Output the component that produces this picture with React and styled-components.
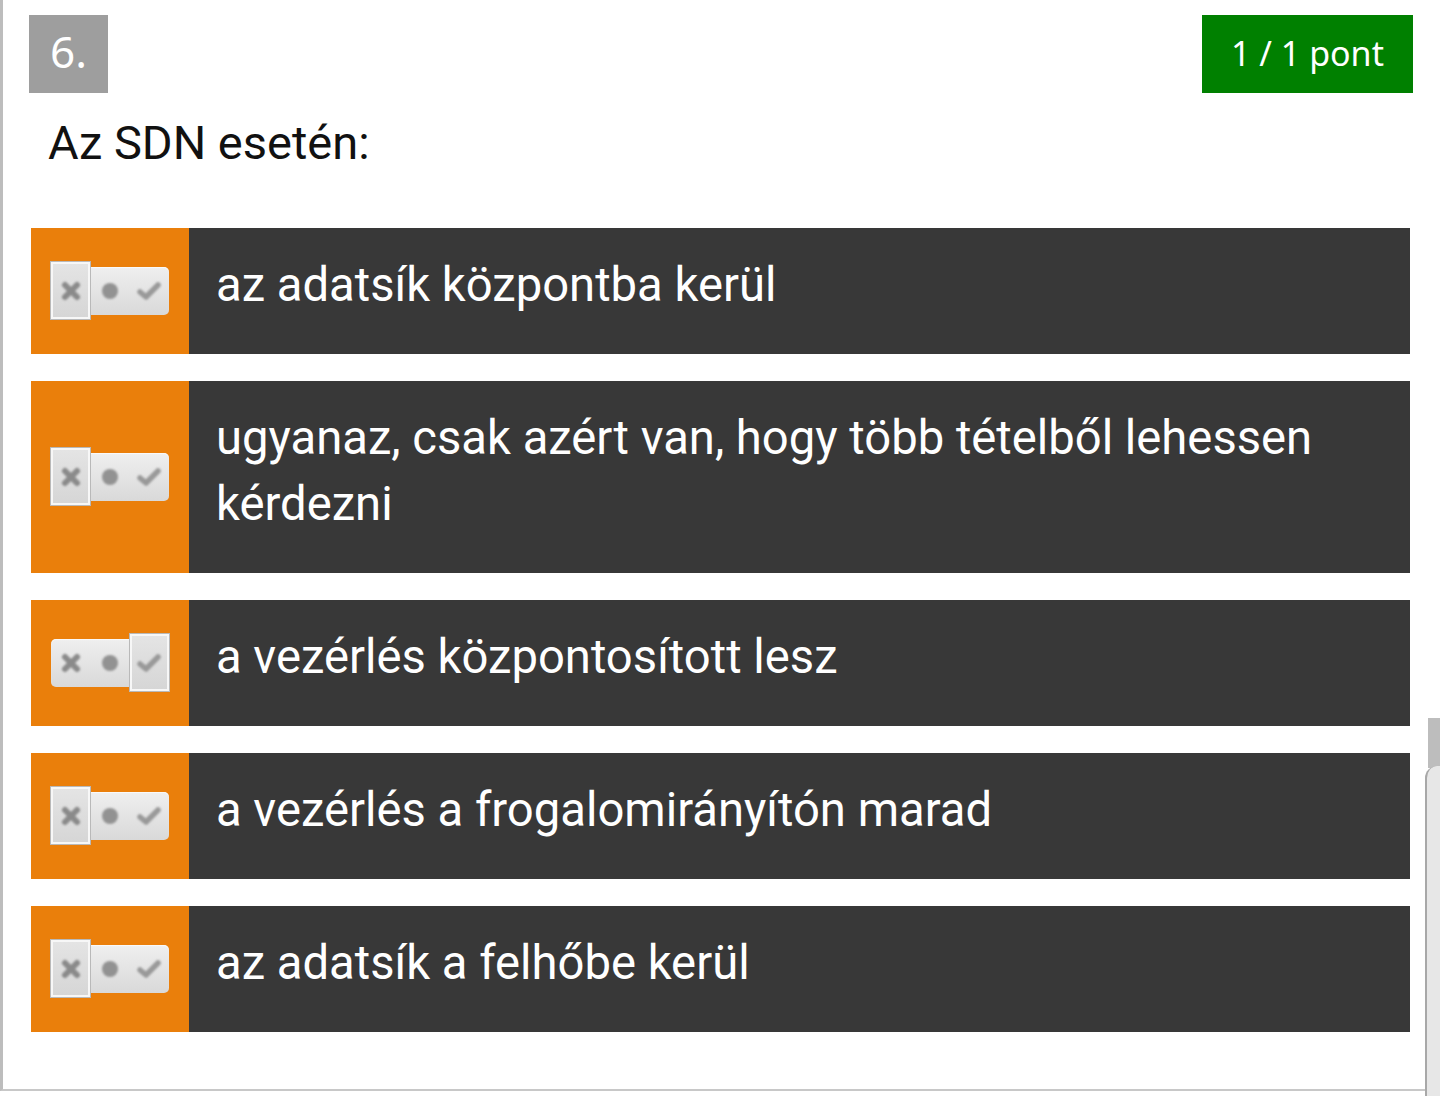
import styled, { createGlobalStyle } from "styled-components";

const GlobalStyle = createGlobalStyle`
  html, body {
    margin: 0;
    padding: 0;
    background: #ffffff;
  }
  body {
    font-family: Roboto, "Noto Sans", sans-serif;
  }
`;

const Page = styled.div`
  position: relative;
  width: 1440px;
  height: 1096px;
  overflow: hidden;
  background: #ffffff;
`;

const Card = styled.div`
  box-sizing: border-box;
  height: 1091px;
  border-left: 3px solid #bdbdbd;
  border-bottom: 2px solid #c8c8c8;
  padding: 15px 27px 0 26px;
`;

const Header = styled.div`
  display: flex;
  justify-content: space-between;
  align-items: flex-start;
`;

const Badge = styled.div`
  display: flex;
  align-items: center;
  justify-content: center;
  height: 78px;
  min-width: ${(p) => p.$min}px;
  box-sizing: border-box;
  background: ${(p) => p.$bg};
  color: #ffffff;
  font-family: "Noto Sans", "Open Sans", sans-serif;
  font-size: ${(p) => p.$size}px;
  line-height: 1;
  padding-bottom: ${(p) => p.$lift}px;
`;

const Question = styled.div`
  margin: 22px 0 57px 19px;
  font-size: 47px;
  line-height: 56px;
  color: #111111;
`;

const Options = styled.div`
  display: flex;
  flex-direction: column;
  gap: 27px;
  margin: 0 3px 0 2px;
`;

const Option = styled.div`
  display: flex;
  min-height: 126px;
  background: #383838;
`;

const Marker = styled.div`
  flex: 0 0 158px;
  display: flex;
  align-items: center;
  justify-content: center;
  background: #ea7f0b;
`;

const Answer = styled.div`
  flex: 1;
  padding: 24px 27px 36px 27px;
  font-size: 47.2px;
  line-height: 66px;
  color: #ffffff;
`;

const Toggle = styled.div`
  display: flex;
  width: 118px;
  height: 48px;
  border-radius: 5px;
  background: linear-gradient(#efefef, #d9d9d9);
  box-shadow: inset 0 1px 1px rgba(255, 255, 255, 0.7);
`;

const Slot = styled.div`
  position: relative;
  flex: 1;
  display: flex;
  align-items: center;
  justify-content: center;

  ${(p) =>
    p.$active &&
    `
    &::before {
      content: "";
      position: absolute;
      left: 0;
      right: 0;
      top: -5px;
      bottom: -4px;
      background: linear-gradient(#e4e4e4, #d6d6d6);
      border: 2px solid #f7f7f7;
      outline: 1px solid #b9b9b9;
      box-sizing: border-box;
    }
  `}

  svg {
    position: relative;
    filter: blur(0.8px);
  }
`;

const ScrollThumb = styled.div`
  position: absolute;
  top: 718px;
  right: 0;
  width: 12px;
  height: 50px;
  background: #bdbdbd;
`;

const ScrollTrack = styled.div`
  position: absolute;
  top: 766px;
  left: 1425px;
  right: 0;
  bottom: 0;
  background: #e7e7e7;
  border-left: 2px solid #a8a8a8;
  border-top-left-radius: 12px;
`;

const CrossIcon = () => (
  <svg width="22" height="22" viewBox="0 0 22 22">
    <path d="M5 5 L17 17 M17 5 L5 17" stroke="#8a8a8a" strokeWidth="6" strokeLinecap="round" />
  </svg>
);

const DotIcon = () => (
  <svg width="20" height="20" viewBox="0 0 20 20">
    <circle cx="10" cy="10" r="8" fill="#929292" />
  </svg>
);

const CheckIcon = () => (
  <svg width="26" height="22" viewBox="0 0 26 22">
    <path d="M4 12 L10 17 L22 5" stroke="#999999" strokeWidth="5.5" fill="none" strokeLinecap="round" strokeLinejoin="round" />
  </svg>
);

const options = [
  { text: "az adatsík központba kerül", pick: 0 },
  { text: "ugyanaz, csak azért van, hogy több tételből lehessen kérdezni", pick: 0 },
  { text: "a vezérlés központosított lesz", pick: 2 },
  { text: "a vezérlés a frogalomirányítón marad", pick: 0 },
  { text: "az adatsík a felhőbe kerül", pick: 0 },
];

function ToggleSwitch({ pick }) {
  return (
    <Toggle>
      <Slot $active={pick === 0}>
        <CrossIcon />
      </Slot>
      <Slot $active={pick === 1}>
        <DotIcon />
      </Slot>
      <Slot $active={pick === 2}>
        <CheckIcon />
      </Slot>
    </Toggle>
  );
}

export default function App() {
  return (
    <Page>
      <GlobalStyle />
      <Card>
        <Header>
          <Badge $bg="#9e9e9e" $size={44} $min={79} $lift={6}>
            6.
          </Badge>
          <Badge $bg="#008000" $size={34} $min={211} $lift={2}>
            1 / 1 pont
          </Badge>
        </Header>
        <Question>Az SDN esetén:</Question>
        <Options>
          {options.map((o, i) => (
            <Option key={i}>
              <Marker>
                <ToggleSwitch pick={o.pick} />
              </Marker>
              <Answer>{o.text}</Answer>
            </Option>
          ))}
        </Options>
      </Card>
      <ScrollThumb />
      <ScrollTrack />
    </Page>
  );
}
